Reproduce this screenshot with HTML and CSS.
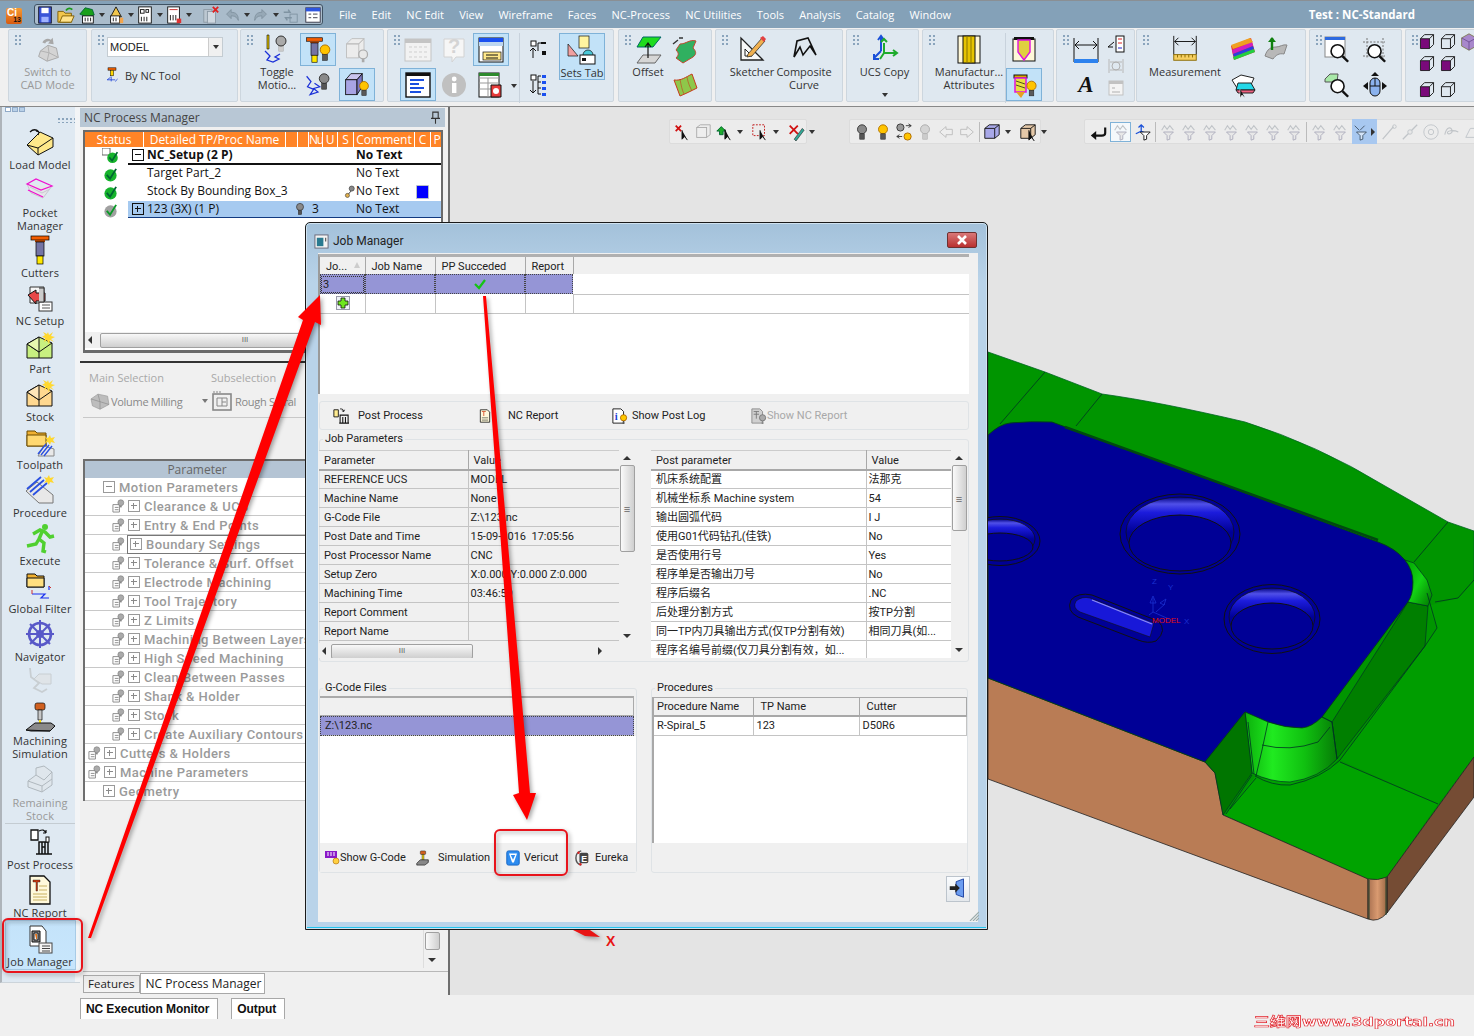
FILE: index.html
```html
<!DOCTYPE html>
<html lang="en">
<head>
<meta charset="utf-8">
<title>Job Manager</title>
<link rel="stylesheet" href="styles.css">
</head>
<body>
<svg class="defs" aria-hidden="true">
  <defs>
    <linearGradient id="gWall" x1="0" x2="1" y1="0" y2="0"><stop offset="0" stop-color="#0cb00c"/><stop offset=".3" stop-color="#20ea20"/><stop offset=".65" stop-color="#10c010"/><stop offset="1" stop-color="#067c06"/></linearGradient>
    <linearGradient id="gCorner" x1="0" x2="1" y1="0" y2="1"><stop offset="0" stop-color="#00a000"/><stop offset=".5" stop-color="#14d414"/><stop offset="1" stop-color="#007400"/></linearGradient>
    <linearGradient id="gHole" x1="0" x2="0" y1="0" y2="1"><stop offset="0" stop-color="#000080"/><stop offset=".1" stop-color="#5050e8"/><stop offset=".22" stop-color="#1c1cdc"/><stop offset=".5" stop-color="#000096"/></linearGradient>
    <linearGradient id="gBrown" x1="0" x2="1" y1="0" y2="0"><stop offset="0" stop-color="#a87050"/><stop offset=".5" stop-color="#d99a70"/><stop offset="1" stop-color="#9a6844"/></linearGradient>
    <symbol id="bulbY" viewBox="0 0 12 20"><circle cx="6" cy="7" r="5" fill="#ffc400" stroke="#b07000"/><rect x="3.5" y="12" width="5" height="6" fill="#5a5a5a" stroke="#222" stroke-width=".6"/></symbol>
    <symbol id="bulbG" viewBox="0 0 12 20"><circle cx="6" cy="7" r="5" fill="#8a8a8a" stroke="#333"/><rect x="3.5" y="12" width="5" height="6" fill="#555" stroke="#222" stroke-width=".6"/></symbol>
    <symbol id="bulbD" viewBox="0 0 12 20"><circle cx="6" cy="7" r="5" fill="#d4d4d4" stroke="#aaa"/><rect x="3.5" y="12" width="5" height="6" fill="#ccc" stroke="#aaa" stroke-width=".6"/></symbol>
    <symbol id="tool" viewBox="0 0 32 32"><rect x="7" y="2" width="18" height="4" fill="#f25c00" stroke="#000" stroke-width=".7"/><rect x="11" y="6" width="10" height="2" fill="#a84000"/><rect x="12" y="8" width="8" height="14" fill="#7474a4" stroke="#000" stroke-width=".7"/><rect x="13" y="22" width="6" height="8" fill="#ffe800" stroke="#000" stroke-width=".7"/></symbol>
    <symbol id="chk" viewBox="0 0 16 16"><circle cx="8" cy="9" r="6.5" fill="#16b32c"/><path d="M4 8.5l3.5 4L14 2" fill="none" stroke="#063" stroke-width="2"/></symbol>
    <symbol id="chkG" viewBox="0 0 16 16"><circle cx="8" cy="9" r="6.5" fill="#a0a0a0"/><path d="M4 8.5l3.5 4L14 2" fill="none" stroke="#0a9a28" stroke-width="2"/></symbol>
    <symbol id="tp" viewBox="0 0 14 15"><path d="M1 6h7v8H1z" fill="#fff" stroke="#888"/><path d="M3 9h4M3 11.5h4" stroke="#888"/><circle cx="9.5" cy="4" r="3.2" fill="#aaa" stroke="#777" stroke-width=".6"/><path d="M8.5 7h2v2h-2z" fill="#888"/></symbol>
    <symbol id="fun" viewBox="0 0 20 20"><path d="M5 10h11l-4 4v4l-3 1v-5z" fill="#e8e8e8" stroke="#aab" stroke-width="1"/><path d="M3 8l3-5 3 4 3-4 4 5" fill="none" stroke="#c0c4c8" stroke-width="1.2"/></symbol>
    <symbol id="funK" viewBox="0 0 20 20"><path d="M5 10h11l-4 4v4l-3 1v-5z" fill="#fff" stroke="#111" stroke-width="1"/></symbol>
    <symbol id="cubeGrey" viewBox="0 0 32 32"><path d="M3 13l10-7 14 3 2 12-13 7-11-5z" fill="#bdbdbd" stroke="#9a9a9a"/><path d="M13 6l3 11-13-4M16 17l0 11M16 17l13 4" fill="none" stroke="#8e8e8e"/></symbol>
    <symbol id="boxOut" viewBox="0 0 22 22"><path d="M3 7h11v12H3zM3 7l5-5h11l-5 5M19 2v12l-5 5" fill="none" stroke="#111" stroke-width="1.1"/></symbol>
    <symbol id="boxPur" viewBox="0 0 22 22"><path d="M3 7h11v12H3z" fill="#7a0a7a" stroke="#111"/><path d="M3 7l5-5h11l-5 5M19 2v12l-5 5" fill="none" stroke="#111" stroke-width="1.1"/></symbol>
    <symbol id="mag" viewBox="0 0 32 32"><circle cx="13" cy="15" r="8" fill="#fff" stroke="#111" stroke-width="2"/><path d="M19 21l7 7" stroke="#111" stroke-width="3"/></symbol>
  </defs>
</svg>

<div class="app">
  <header class="titlebar">
    <div class="logo"><span class="logo-c">Ci</span><span class="logo-n">13</span></div>
    <div class="qat">
      <svg class="q" viewBox="0 0 20 20"><rect x="3" y="1" width="14" height="18" fill="#3a55d8" stroke="#112"/><rect x="6" y="2" width="8" height="6" fill="#fff"/><rect x="6" y="12" width="8" height="6" fill="#9fb2ff"/></svg>
      <svg class="q" viewBox="0 0 20 20"><path d="M1 6h6l2 2h7v10H1z" fill="#f2c64c" stroke="#7a5a00"/><path d="M3 18l3-7h13l-3 7z" fill="#ffe28a" stroke="#7a5a00"/><path d="M10 5c2-3 5-3 7-1" fill="none" stroke="#1c9a1c" stroke-width="2"/></svg>
      <svg class="q" viewBox="0 0 20 20"><path d="M2 9l6-7 8 2 2 6-8 2z" fill="#1aa01a" stroke="#063"/><rect x="5" y="11" width="12" height="8" fill="#fff" stroke="#111"/><path d="M8 13v4M11 13v4M14 13v4" stroke="#111"/></svg>
      <i class="dd"></i>
      <svg class="q" viewBox="0 0 20 20"><path d="M10 1l6 11H4z" fill="#f2c64c" stroke="#111"/><rect x="4" y="11" width="10" height="8" fill="#fff" stroke="#111"/><path d="M7 13v4M10 13v4" stroke="#111"/><rect x="14" y="13" width="4" height="6" fill="#f2a44c"/></svg>
      <i class="dd"></i>
      <svg class="q" viewBox="0 0 20 20"><rect x="3" y="1" width="14" height="18" fill="#fff" stroke="#111"/><rect x="5" y="4" width="4" height="4" fill="none" stroke="#111"/><rect x="11" y="4" width="3" height="3" fill="none" stroke="#111"/><path d="M6 12v5M9 12v5M12 12v5" stroke="#111"/></svg>
      <i class="dd"></i>
      <svg class="q" viewBox="0 0 20 20"><rect x="3" y="1" width="13" height="18" fill="#fff" stroke="#111"/><path d="M5 4h9" stroke="#c22"/><path d="M6 10v6M9 10v6M12 10v6" stroke="#111"/><rect x="13" y="14" width="5" height="5" fill="#d33"/></svg>
      <i class="dd"></i>
      <svg class="q q-gap" viewBox="0 0 20 20"><rect x="2" y="4" width="9" height="14" fill="#bcc8d2" stroke="#8a98a4"/><rect x="6" y="6" width="9" height="13" fill="#cfd8e0" stroke="#8a98a4"/><path d="M12 1l6 6M18 1l-6 6" stroke="#e02020" stroke-width="2"/></svg>
      <svg class="q" viewBox="0 0 20 20"><path d="M4 9l5-5v3c6 0 8 3 8 9-2-4-4-5-8-5v3z" fill="#96a8b6" stroke="#80929f"/></svg>
      <i class="dd"></i>
      <svg class="q" viewBox="0 0 20 20"><path d="M16 9l-5-5v3c-6 0-8 3-8 9 2-4 4-5 8-5v3z" fill="#96a8b6" stroke="#80929f"/></svg>
      <i class="dd"></i>
      <svg class="q" viewBox="0 0 20 20"><path d="M3 7h7l-2-3M12 13H5l2 3" fill="none" stroke="#7f93a2" stroke-width="1.6"/><rect x="10" y="9" width="8" height="9" fill="none" stroke="#7f93a2"/></svg>
      <svg class="q q-hl" viewBox="0 0 20 20"><rect x="2" y="2" width="16" height="16" fill="#fff" stroke="#334"/><rect x="2" y="2" width="16" height="4" fill="#2d55e0"/><path d="M5 9h3M10 9h5M5 13h3M10 13h5" stroke="#334"/></svg>
    </div>
    <nav class="menu">
      <span>File</span><span>Edit</span><span>NC Edit</span><span>View</span><span>Wireframe</span><span>Faces</span><span>NC-Process</span><span>NC Utilities</span><span>Tools</span><span>Analysis</span><span>Catalog</span><span>Window</span>
    </nav>
    <div class="app-title">Test : NC-Standard</div>
  </header>

  <section class="ribbon">
    <div class="group g1"><i class="grip"></i>
      <div class="tool off w79">
        <div class="ti32"><svg class="ic30" viewBox="0 0 32 32"><path d="M8 18l8-6 9 3 2 10-12 4-9-5z" fill="#d4d4d4" stroke="#a6a6a6"/><path d="M16 12l1 8-9-2M17 20l-2 9M17 20l10 5" fill="none" stroke="#b0b0b0"/><path d="M10 9c2-4 6-5 9-3l2-2 1 7-6-1 2-2c-2-1-4 0-5 2z" fill="#a8a8a8"/></svg></div>
        <span>Switch to<br>CAD Mode</span>
      </div>
    </div>
    <div class="group g2"><i class="grip"></i>
      <div class="stack">
        <div class="combo"><span>MODEL</span><b><i class="dd"></i></b></div>
        <div class="bynctool">
          <svg class="ic16" viewBox="0 0 16 20"><rect x="3" y="1" width="10" height="3" fill="#e85c00" stroke="#000" stroke-width=".6"/><rect x="6" y="4" width="4" height="7" fill="#ffd800" stroke="#000" stroke-width=".6"/><path d="M7 12v6M2 16h10M2 16l4-3M12 18l3-3" stroke="#1a3fd8" fill="none"/></svg>
          <span>By NC Tool</span>
        </div>
      </div>
    </div>
    <div class="group g3"><i class="grip"></i>
      <div class="tool w40">
        <div class="ti32"><svg class="ic32" viewBox="0 0 32 32"><path d="M6 2h2v14H6z" fill="#e8c800" stroke="#000" stroke-width=".6"/><path d="M4 18l5 5-3 4 6 2 6-3-4-2 5-3" fill="none" stroke="#1a2fd8" stroke-width="1.3"/><use href="#bulbD" x="14" y="2" width="12" height="18"/><circle cx="20" cy="8" r="5" fill="#aaa" stroke="#333"/></svg></div>
        <span>Toggle<br>Motio...</span>
      </div>
      <div class="col w36 ml3">
        <div class="slot hl"><svg class="ic26" viewBox="0 0 32 32"><use href="#tool" x="-4" width="32" height="32"/><use href="#bulbY" x="17" y="8" width="14" height="22"/></svg></div>
        <div class="slot"><svg class="ic26" viewBox="0 0 32 32"><path d="M3 6l5 6-4 6 7 3-4 6 9-3-5-4 7-2-6-4" fill="none" stroke="#1a2fd8" stroke-width="1.4"/><use href="#bulbG" x="16" y="1" width="14" height="22"/></svg></div>
      </div>
      <div class="col w36 ml3">
        <div class="slot"><svg class="ic26" viewBox="0 0 32 32"><path d="M4 9l6-6h14l-6 6zM4 9h14v16H4zM18 9l6-6v14l-6 8" fill="#ececec" stroke="#bcbcbc"/><circle cx="23" cy="21" r="5" fill="#e8e8e8" stroke="#aaa" stroke-width="1.4"/><path d="M23 26v4" stroke="#aaa" stroke-width="3"/></svg></div>
        <div class="slot hl"><svg class="ic26" viewBox="0 0 32 32"><path d="M3 10l6-7h13l-6 7z" fill="#c8c4ee" stroke="#111"/><rect x="3" y="10" width="13" height="17" fill="#a8a4e4" stroke="#111"/><path d="M16 10l6-7v15l-6 9z" fill="#7c78c4" stroke="#111"/><use href="#bulbY" x="18" y="10" width="12" height="20"/></svg></div>
      </div>
    </div>
    <div class="group g4"><i class="grip"></i>
      <div class="col w36">
        <div class="slot"><svg class="ic26" viewBox="0 0 28 28"><rect x="1" y="3" width="26" height="22" fill="#f2f2f2" stroke="#c4c4c4"/><rect x="1" y="3" width="26" height="4" fill="#c4c4c4"/><path d="M5 11h18M5 16h18M5 21h18" stroke="#cfcfcf" stroke-dasharray="3 2"/></svg></div>
        <div class="slot hl"><svg class="ic26" viewBox="0 0 28 28"><rect x="2" y="2" width="24" height="24" fill="#fff" stroke="#111" stroke-width="1.4"/><rect x="2" y="2" width="24" height="3" fill="#111"/><path d="M6 9h14M6 13h9M6 17h14M6 21h11" stroke="#1a4fe0" stroke-width="2"/></svg></div>
      </div>
      <div class="col w36">
        <div class="slot"><svg class="ic26" viewBox="0 0 28 28"><path d="M4 3h20v18h-8l-4 5v-5H4z" fill="#f6f6f6" stroke="#d2d2d2"/><text class="glyph" x="14" y="17" text-anchor="middle">?</text></svg></div>
        <div class="slot"><svg class="ic26" viewBox="0 0 28 28"><circle cx="14" cy="14" r="12" fill="#c0c0c0"/><rect x="12" y="12" width="4.4" height="10" fill="#fff"/><circle cx="14.2" cy="8" r="2.4" fill="#fff"/></svg></div>
      </div>
      <div class="col w36 ml1">
        <div class="slot hl"><svg class="ic26" viewBox="0 0 28 28"><rect x="2" y="2" width="24" height="24" fill="#fff" stroke="#111"/><rect x="2" y="2" width="24" height="4" fill="#1a50f0"/><rect x="2" y="6" width="24" height="4" fill="#bcd6f0"/><rect x="6" y="16" width="18" height="8" fill="#ffe88a" stroke="#111" stroke-width=".7"/><path d="M9 19h12M9 22h12" stroke="#111"/></svg></div>
        <div class="slot"><svg class="ic26" viewBox="0 0 28 28"><rect x="2" y="2" width="20" height="24" fill="#fff" stroke="#111"/><path d="M2 7h20M2 12h20M2 18h20M11 7v19" stroke="#999"/><rect x="2" y="2" width="20" height="3" fill="#2d8a2d"/><path d="M14 14h10v12H14z" fill="#e63a3a" stroke="#111"/><circle cx="19" cy="20" r="3" fill="#fff"/></svg></div>
      </div>
      <div class="ddcol"><i class="dd"></i></div>
      <div class="col w38 sepl">
        <div class="slot"><svg class="ic20" viewBox="0 0 20 24"><rect x="2" y="3" width="5" height="5" fill="#fff" stroke="#111"/><rect x="12" y="4" width="5" height="2" fill="#111"/><path d="M9 5h3M9 5v8" stroke="#111"/><rect x="13" y="13" width="4" height="4" fill="#111"/><path d="M4 10v10M1 13l3-3 3 3" fill="none" stroke="#111"/></svg></div>
        <div class="slot"><svg class="ic20" viewBox="0 0 20 24"><rect x="2" y="2" width="5" height="5" fill="#fff" stroke="#111"/><path d="M4 8v12M1 17l3 3 3-3M12 3h-3v18h3M9 9h3M9 15h3" fill="none" stroke="#111"/><path d="M13 2h4v3h-4zM13 8h4v3h-4zM13 14h4v3h-4zM13 20h4v3h-4z" fill="#1a50f0"/></svg></div>
      </div>
      <div class="tool hl w46 h47 ml2">
        <div class="ti32 t-sets"><svg class="ic32" viewBox="0 0 32 32"><rect x="13" y="2" width="10" height="12" fill="#fff4a0" stroke="#111" stroke-width=".7"/><path d="M2 10l10 12H2z" fill="#f0a0a0" stroke="#111" stroke-width=".7"/><circle cx="22" cy="21" r="5" fill="#4ac8d8" stroke="#111" stroke-width=".7"/><rect x="14" y="21" width="15" height="9" fill="#fff" stroke="#111"/><rect x="16" y="24" width="4" height="3" fill="#111"/></svg></div>
        <span class="lab1">Sets Tab</span>
      </div>
    </div>
    <div class="group g5"><i class="grip"></i>
      <div class="tool w40">
        <div class="ti32"><svg class="ic32" viewBox="0 0 32 32"><path d="M5 14L11 4h18l-8 10z" fill="#1edc1e" stroke="#066"/><path d="M5 30l6-8h18l-6 8z" fill="#d6d6d6" stroke="#666"/><path d="M16 25V11M13 14l3-4 3 4" fill="none" stroke="#111" stroke-width="1.2"/></svg></div>
        <span>Offset</span>
      </div>
      <div class="col w34">
        <div class="slot"><svg class="ic26" viewBox="0 0 28 28"><path d="M9 8c6 0 10-5 16-3l-3 7c3 3 4 6 0 9l-10 6-7-5c3-3 3-5 0-8z" fill="#30b060" stroke="#c04a30"/><path d="M2 8l5-4M8 2l4 0" stroke="#333" stroke-width="1.4"/></svg></div>
        <div class="slot"><svg class="ic26" viewBox="0 0 28 28"><path d="M3 9c7 1 12-3 18-6l5 14c-6 3-12 6-17 8z" fill="#8ec84a" stroke="#c83a1c"/><path d="M9 8c1 6 2 11 4 15M16 6c1 6 3 10 5 14" stroke="#c83a1c" fill="none" stroke-width=".6"/></svg></div>
      </div>
    </div>
    <div class="group g6"><i class="grip"></i>
      <div class="tool w46">
        <div class="ti32"><svg class="ic26" viewBox="0 0 28 28"><path d="M3 3v22h22z" fill="#f8f8f8" stroke="#222" stroke-width="1.3"/><path d="M7 14v7h7z" fill="#fff" stroke="#222"/><path d="M10 19L24 3l3 3-13 15-5 1z" fill="#f0b050" stroke="#222" stroke-width=".7"/><path d="M22 3l3-2 3 3-2 3z" fill="#e24040"/></svg></div>
        <span>Sketcher</span>
      </div>
      <div class="tool w56 ml1">
        <div class="ti32"><svg class="ic26" viewBox="0 0 28 28"><path d="M4 22L7 6l11-3 8 17-6-9-7 9-3-8z" fill="none" stroke="#111" stroke-width="1.6"/></svg></div>
        <span>Composite<br>Curve</span>
      </div>
    </div>
    <div class="group g7"><i class="grip"></i>
      <div class="tool w73">
        <div class="ti32"><svg class="ic32" viewBox="0 0 32 32"><path d="M12 4v14M12 18l-7 7M9 7l3-4 3 4" fill="none" stroke="#1a50d8" stroke-width="2"/><path d="M5 21v5h5" fill="none" stroke="#1a50d8" stroke-width="2"/><path d="M15 10v10M15 20l-4 6M15 20h12M24 17l4 3-4 3M12 9l3-3 3 3" fill="none" stroke="#1eab2c" stroke-width="2"/></svg></div>
        <span>UCS Copy</span>
        <i class="dd dd-ucs"></i>
      </div>
    </div>
    <div class="group g8"><i class="grip"></i>
      <div class="tool w72">
        <div class="ti32"><svg class="ic32" viewBox="0 0 32 32"><rect x="5" y="3" width="22" height="27" fill="#fff8d8" stroke="#111"/><rect x="10" y="3" width="12" height="27" fill="#e6c400" stroke="#111"/><path d="M14 3v27M18 3v27" stroke="#8a7400"/></svg></div>
        <span>Manufactur...<br>Attributes</span>
      </div>
      <div class="col w36 sepl">
        <div class="slot"><svg class="ic26" viewBox="0 0 28 28"><rect x="3" y="3" width="22" height="22" fill="#fff8d8" stroke="#111"/><path d="M4 1h20v3H4z" fill="#111"/><path d="M8 4h12v12l-6 8-6-8z" fill="#e0d040" stroke="#e010e0" stroke-width="1.4"/></svg></div>
        <div class="slot hl"><svg class="ic26" viewBox="0 0 28 28"><rect x="4" y="4" width="13" height="3" fill="#d8a800" stroke="#111"/><rect x="5" y="7" width="11" height="14" fill="#e8e040" stroke="#e010e0" stroke-width="1.5"/><path d="M6 10l9 3M6 14l9 3" stroke="#111" stroke-width=".7"/><path d="M6 21h9l-4 6z" fill="#e8a020"/><use href="#bulbY" x="16" y="8" width="11" height="19"/></svg></div>
      </div>
    </div>
    <div class="group g9"><i class="grip"></i>
      <div class="col w36">
        <div class="slot"><svg class="ic26" viewBox="0 0 28 28"><path d="M2 2v24M26 2v24" stroke="#111"/><path d="M3 9h22M7 5L3 9l4 4M21 5l4 4-4 4" fill="none" stroke="#111"/><rect x="2" y="23" width="24" height="4" fill="#2d82ee"/></svg></div>
        <div class="slot"><span class="big-a">A</span></div>
      </div>
      <div class="col w24 mini3">
        <svg class="ic18" viewBox="0 0 18 18"><rect x="9" y="1" width="8" height="16" fill="#fff" stroke="#111"/><path d="M1 12l6-5M1 12h5" stroke="#111" fill="none"/><path d="M11 4h4M11 8h4" stroke="#d22"/><path d="M11 13h4" stroke="#22c"/></svg>
        <svg class="ic18" viewBox="0 0 18 18"><path d="M2 2v14M16 2v14M3 5h12M3 13h12" stroke="#b8b8b8" fill="none"/><circle cx="9" cy="9" r="4" fill="none" stroke="#b0b0b0"/></svg>
        <svg class="ic18" viewBox="0 0 18 18"><rect x="2" y="2" width="14" height="14" fill="#f4f4f4" stroke="#c2c2c2"/><rect x="2" y="2" width="14" height="3" fill="#c2c2c2"/><path d="M5 13h8M5 9h3" stroke="#b0b0b0"/></svg>
      </div>
    </div>
    <div class="group g10"><i class="grip"></i>
      <div class="tool w74">
        <div class="ti32"><svg class="ic30" viewBox="0 0 32 32"><path d="M4 2v20M28 2v20" stroke="#111"/><path d="M5 8h22M9 4L5 8l4 4M23 4l4 4-4 4" fill="none" stroke="#111"/><rect x="4" y="22" width="24" height="6" fill="#f6cf60" stroke="#8a6a00"/><path d="M8 22v3M12 22v3M16 22v3M20 22v3M24 22v3" stroke="#8a6a00"/></svg></div>
        <span>Measurement</span>
      </div>
      <div class="col w36 ml3">
        <div class="slot"><svg class="ic26" viewBox="0 0 28 28"><path d="M2 10l20-8 4 14-21 8z" fill="#e83030"/><path d="M3 14l20-8 1 4-20 8z" fill="#d020c0"/><path d="M4 18l20-8 1 3-20 8z" fill="#2a40e0"/><path d="M4 21l21-8 1 3-21 8z" fill="#20d040"/><path d="M2 9l19-7 3 4-20 7z" fill="#f0a020"/></svg></div>
        <div class="slot"><svg class="ic26" viewBox="0 0 28 28"><path d="M3 9l9-5 13 3-4 9-13 1z" fill="#fff" stroke="#222"/><path d="M9 12h13l4 7H7z" fill="#24d8e8" stroke="#222"/><path d="M7 19h19l-2 3H9z" fill="#f06080" stroke="#222"/><path d="M11 18v9l2-3 3 3" fill="#111" stroke="#fff" stroke-width=".5"/></svg></div>
      </div>
      <div class="col w36 ml-3">
        <div class="slot"><svg class="ic26" viewBox="0 0 28 28"><path d="M3 20c2-7 6-9 11-9 4 0 7-3 11-2l-3 9c-5-1-8 1-11 5z" fill="#b8b8b8" stroke="#888"/><path d="M10 14V2" stroke="#108010" stroke-width="2.4"/><path d="M6 6l4-5 4 5z" fill="#108010"/></svg></div>
      </div>
    </div>
    <div class="group g11"><i class="grip"></i>
      <div class="col w36">
        <div class="slot"><svg class="ic26" viewBox="0 0 28 28"><rect x="1" y="1" width="20" height="20" fill="#fff" stroke="#888"/><rect x="1" y="1" width="20" height="3" fill="#2d6ae0"/><use href="#mag" x="3" y="3" width="26" height="26"/></svg></div>
        <div class="slot"><svg class="ic26" viewBox="0 0 28 28"><path d="M1 8l5-5h8l-1 8H1z" fill="#a8e8a8" stroke="#555"/><use href="#mag" x="3" y="3" width="26" height="26"/></svg></div>
      </div>
      <div class="col w36 ml1">
        <div class="slot"><svg class="ic26" viewBox="0 0 28 28"><path d="M2 6h22M6 2v20M22 2v20M2 20h22" stroke="#777" stroke-dasharray="2 1.5"/><use href="#mag" x="3" y="3" width="26" height="26"/></svg></div>
        <div class="slot"><svg class="ic26" viewBox="0 0 28 28"><rect x="9" y="7" width="10" height="18" rx="5" fill="#8ab2ee" stroke="#111"/><path d="M14 7v8M9 15h10" stroke="#111"/><path d="M14 1l-4 4h8zM2 15l5-4v8zM26 15l-5-4v8z" fill="#111"/></svg></div>
      </div>
    </div>
    <div class="group g12"><i class="grip"></i>
      <div class="col w21 boxes"><svg class="ic18"><use href="#boxPur"/></svg><svg class="ic18"><use href="#boxPur"/></svg><svg class="ic18"><use href="#boxPur"/></svg></div>
      <div class="col w21 boxes"><svg class="ic18"><use href="#boxOut"/></svg><svg class="ic18"><use href="#boxPur"/></svg><svg class="ic18"><use href="#boxOut"/></svg></div>
      <div class="col w21 boxes"><svg class="ic18" viewBox="0 0 22 22"><path d="M11 1l9 5v10l-9 5-9-5V6z" fill="#a888cc" stroke="#774"/><path d="M2 6l9 5 9-5M11 11v10" stroke="#6a4a90" fill="none"/></svg></div>
    </div>
  </section>

  <div class="workspace">
    <aside class="sidebar">
      <div class="side-tabs"><i></i><i></i><i></i></div>
      <i class="grip grip-h"></i>
      <div class="sitem"><svg class="ic32" viewBox="0 0 32 32"><path d="M3 19L16 6l13 6v9L14 29z" fill="#ffe88a" stroke="#111"/><path d="M3 19l11 3 15-10M14 22v7" fill="none" stroke="#111"/><path d="M6 6c3-3 6-3 9 0M15 6l-3-1M15 6l-1 3" fill="none" stroke="#111" stroke-width="1.2"/></svg><span>Load Model</span></div>
      <div class="sitem tall"><svg class="ic32" viewBox="0 0 32 32"><path d="M3 10l9-5 16 7-10 5z" fill="none" stroke="#f010d0" stroke-width="1.3"/><path d="M6 13l12 6 8-4M3 10l4 9 12 5 9-12" fill="#e6e6ea" stroke="#c8c8d0"/><path d="M3 10l14 6 11-4M4 16l15 7" fill="none" stroke="#f010d0" stroke-width="1.3"/></svg><span>Pocket<br>Manager</span></div>
      <div class="sitem"><svg class="ic32"><use href="#tool"/></svg><span>Cutters</span></div>
      <div class="sitem"><svg class="ic32" viewBox="0 0 32 32"><path d="M6 5h14v16H6z" fill="#f6f6f6" stroke="#333"/><path d="M4 13l8-5v3h9v8h-9v3z" fill="#e84848" stroke="#111"/><rect x="15" y="20" width="13" height="9" fill="#fff" stroke="#333"/><path d="M18 23h8M18 26h8" stroke="#555"/><path d="M15 6h5v14h-5" fill="#ccc" stroke="#333"/></svg><span>NC Setup</span></div>
      <div class="sitem"><svg class="ic32" viewBox="0 0 32 32"><path d="M3 14l12-7 13 6v15H3z" fill="#c8f080" stroke="#111"/><path d="M3 14l12 8 13-9M15 22v6" fill="none" stroke="#111"/><path d="M3 14l12-7 0 15z" fill="#e8f8b0" stroke="#111"/><path d="M24 2l1 3 4-3-2 4 4 1-4 2 3 3-4-2-1 4-2-4-3 2 1-4-3-1 3-2-2-3 4 2z" fill="#ffd830"/></svg><span>Part</span></div>
      <div class="sitem"><svg class="ic32" viewBox="0 0 32 32"><path d="M3 14l12-7 13 6v15H3z" fill="#ffd890" stroke="#111"/><path d="M3 14l12 8 13-9M15 22v6" fill="none" stroke="#111"/><path d="M3 14l12-7 0 15z" fill="#ffe6b8" stroke="#111"/><path d="M24 2l1 3 4-3-2 4 4 1-4 2 3 3-4-2-1 4-2-4-3 2 1-4-3-1 3-2-2-3 4 2z" fill="#ffd830"/></svg><span>Stock</span></div>
      <div class="sitem"><svg class="ic32" viewBox="0 0 32 32"><path d="M3 5h8l2 2h9v13H3z" fill="#f0b030" stroke="#6a4a00"/><path d="M3 9h19v11H3z" fill="#ffd870" stroke="#6a4a00"/><path d="M14 30l6-10 10 3v7z" fill="#e8e8e8" stroke="#888"/><path d="M14 28l8-10M17 29l8-10M20 30l8-10" stroke="#2a50e0" stroke-width="1.4"/><path d="M26 9l1 3 4-1-2 3 2 3-4-1-1 3-2-3-3 1 2-3-2-3 3 1z" fill="#ffd830"/></svg><span>Toolpath</span></div>
      <div class="sitem"><svg class="ic32" viewBox="0 0 32 32"><path d="M2 17l11-9 16 13v8H15z" fill="#e8e8e8" stroke="#777"/><path d="M3 15L17 3M6 18L20 6M9 21L23 9" stroke="#2a50e0" stroke-width="1.8"/><path d="M25 1l1 3 4-1-2 3 2 3-4-1-1 3-2-3-3 1 2-3-2-3 3 1z" fill="#ffd830"/></svg><span>Procedure</span></div>
      <div class="sitem"><svg class="ic32" viewBox="0 0 32 32"><circle cx="21" cy="5" r="3" fill="#50d030"/><path d="M9 12l7-4 5 2 5 5 4-1M18 10l-3 7 5 4-1 8 3 1M15 17l-3 5-9 2" fill="none" stroke="#50d030" stroke-width="3.4"/></svg><span>Execute</span></div>
      <div class="sitem"><svg class="ic32" viewBox="0 0 32 32"><path d="M3 4h8l2 2h7v11H3z" fill="#f0b030" stroke="#111"/><path d="M3 8h17v9H3z" fill="#ffdf80" stroke="#111"/><path d="M8 24h13l-4 4h8M25 20v-4" fill="none" stroke="#1a30f0" stroke-width="1.2"/><path d="M25 16l2 2M8 24v-4" stroke="#d03030"/></svg><span>Global Filter</span></div>
      <div class="sitem"><svg class="ic32" viewBox="0 0 32 32"><g fill="none" stroke="#5858c8"><circle cx="16" cy="16" r="11" stroke-width="2.6"/><circle cx="16" cy="16" r="3" stroke-width="2"/><path d="M16 2v28M2 16h28M6 6l20 20M26 6L6 26" stroke-width="2"/></g></svg><span>Navigator</span></div>
      <div class="sitem bare"><svg class="ic32" viewBox="0 0 32 32"><path d="M6 2l1 9 8 6-5 5 8 4 5-3" fill="none" stroke="#c8ced2" stroke-width="1.8"/><path d="M10 13l5-5h12v10H18z" fill="#dfe4e8" stroke="#c8ced2"/></svg></div>
      <div class="sitem tall2"><svg class="ic32" viewBox="0 0 32 32"><rect x="11" y="1" width="10" height="7" rx="2" fill="#d06020" stroke="#111" stroke-width=".7"/><path d="M14 8h4v10h-4z" fill="#c8c8c8" stroke="#111" stroke-width=".7"/><rect x="15" y="18" width="2" height="6" fill="#ffe000"/><path d="M2 28l9-7h16l4 3-5 5H7z" fill="#8a8a8a" stroke="#111"/><path d="M2 28l24 1 5-5" fill="none" stroke="#111"/></svg><span>Machining<br>Simulation</span></div>
      <div class="sitem tall2 off"><svg class="ic32" viewBox="0 0 32 32"><path d="M4 17l8-6v-7l8-2 8 6v13l-10 7-14-5z" fill="#dfe6ec" stroke="#b0b8be"/><path d="M4 17l14 5v6M18 22l10-7M12 11l8 5 8-8" fill="none" stroke="#b0b8be"/></svg><span>Remaining<br>Stock</span></div>
      <div class="side-div"></div>
      <div class="sitem"><svg class="ic32" viewBox="0 0 32 32"><path d="M7 4h7v10H7z" fill="#fff" stroke="#111" stroke-width="1.3"/><path d="M15 5c4-2 5-1 7 2M22 7l-3 0M22 7l0-3" fill="none" stroke="#111" stroke-width="1.2"/><path d="M15 28V16h9v12M12 28h16M18 16v12M21 16v12M18 21h3" fill="none" stroke="#111" stroke-width="1.5"/><rect x="22" y="11" width="3" height="5" fill="#fff" stroke="#111"/></svg><span>Post Process</span></div>
      <div class="sitem"><svg class="ic32" viewBox="0 0 32 32"><path d="M6 2h14l6 6v22H6z" fill="#fff9dc" stroke="#111" stroke-width="1.3"/><path d="M9 6h7v2h-2.500v9H12V8H9z" fill="#d03a10" stroke="#111" stroke-width=".4"/><path d="M9 20h14M9 23h14M9 26h14M15 12h8M15 16h8" stroke="#c8b060"/></svg><span>NC Report</span></div>
      <div class="sitem active"><svg class="ic32" viewBox="0 0 32 32"><path d="M6 3h12l4 5v15H6z" fill="#fff" stroke="#333"/><path d="M8 8h8v11H8z" fill="#888" stroke="#111"/><path d="M10 10h4v7h-4z" fill="#fff" stroke="#111"/><path d="M11 11h2v5h-1z" fill="#e07018"/><rect x="15" y="20" width="13" height="10" fill="#f4f4f4" stroke="#444"/><path d="M18 23h8M18 25.500h8M18 28h8" stroke="#444"/></svg><span>Job Manager</span></div>
    </aside>

    <div class="work-main">
      <div class="work-top">
        <section class="nc-panel">
          <div class="panel-head"><span>NC Process Manager</span><svg class="pin" viewBox="0 0 10 14"><path d="M2 1h6v7H2zM0 8h10M5 8v6" fill="none" stroke="#333" stroke-width="1.2"/></svg></div>
          <div class="proc-frame">
            <div class="orange">
              <span class="c-status">Status</span><span class="c-name">Detailed TP/Proc Name</span><span class="c-a"></span><span class="c-b"></span><span class="c-nu">Nu</span><span class="c-u">U</span><span class="c-s">S</span><span class="c-com">Comment</span><span class="c-c">C</span><span class="c-p">P</span>
            </div>
            <div class="prow">
              <div class="pstat"><svg class="st st-top" viewBox="0 0 16 16"><rect x="0" y="0" width="8" height="7" fill="#fff" stroke="#666"/><use href="#chk" x="4" y="2" width="13" height="14"/></svg></div>
              <div class="pbody setup"><span class="pexp"><i class="ex dark minus"></i></span><b class="nowrap">NC_Setup (2 P)</b><span></span><span></span><b class="nowrap">No Text</b><span></span></div>
            </div>
            <div class="prow">
              <div class="pstat"><svg class="st"><use href="#chk"/></svg></div>
              <div class="pbody"><span class="pexp"></span><span>Target Part_2</span><span></span><span></span><span>No Text</span><span></span></div>
            </div>
            <div class="prow">
              <div class="pstat"><svg class="st"><use href="#chk"/></svg></div>
              <div class="pbody"><span class="pexp"></span><span class="nowrap">Stock By Bounding Box_3</span><span></span><span class="pend"><svg class="ic12" viewBox="0 0 14 16"><circle cx="9" cy="4" r="3" fill="#888" stroke="#222" stroke-width=".6"/><path d="M8 7l-4 5" stroke="#222"/><circle cx="4" cy="12" r="2.4" fill="#e0b050" stroke="#222" stroke-width=".6"/></svg></span><span>No Text</span><span class="swatch-cell"><i class="swatch"></i></span></div>
            </div>
            <div class="prow">
              <div class="pstat"><svg class="st"><use href="#chkG"/></svg></div>
              <div class="pbody sel"><span class="pexp"><i class="ex dark"></i></span><span>123 (3X) (1 P)</span><span class="pbulb"><svg class="ic12"><use href="#bulbG"/></svg></span><span class="pnum">3</span><span>No Text</span><span></span></div>
            </div>
            <div class="hs proc-hs"><i class="arl"></i><div class="thumb"><em>III</em></div></div>
          </div>
          <div class="lower">
            <div class="lower-main">
              <div class="sel-section">
                <div class="sel-labels"><span>Main Selection</span><span>Subselection</span></div>
                <div class="sel-values">
                  <span class="sel-a"><svg class="ic22"><use href="#cubeGrey"/></svg><span>Volume Milling</span><i class="dd"></i></span>
                  <span class="sel-b"><svg class="ic20" viewBox="0 0 20 20"><rect x="1" y="3" width="18" height="16" fill="none" stroke="#888" stroke-width="1.6"/><path d="M1 1h8" stroke="#888" stroke-dasharray="2 1"/><path d="M5 7h10v8H5zM10 11h4M10 7v8" fill="none" stroke="#888"/></svg><span>Rough Spiral</span></span>
                </div>
              </div>
              <div class="tree">
                <div class="tree-head">Parameter</div>
                <div class="tr l1"><i class="ex minus"></i><span>Motion Parameters</span></div>
                <div class="tr l2"><svg class="tpi"><use href="#tp"/></svg><i class="ex"></i><span>Clearance &amp; UCS</span></div>
                <div class="tr l2"><svg class="tpi"><use href="#tp"/></svg><i class="ex"></i><span>Entry &amp; End Points</span></div>
                <div class="tr l2"><svg class="tpi"><use href="#tp"/></svg><div class="focusbox"><i class="ex"></i><span>Boundary Settings</span></div></div>
                <div class="tr l2"><svg class="tpi"><use href="#tp"/></svg><i class="ex"></i><span>Tolerance &amp; Surf. Offset</span></div>
                <div class="tr l2"><svg class="tpi"><use href="#tp"/></svg><i class="ex"></i><span>Electrode Machining</span></div>
                <div class="tr l2"><svg class="tpi"><use href="#tp"/></svg><i class="ex"></i><span>Tool Trajectory</span></div>
                <div class="tr l2"><svg class="tpi"><use href="#tp"/></svg><i class="ex"></i><span>Z Limits</span></div>
                <div class="tr l2"><svg class="tpi"><use href="#tp"/></svg><i class="ex"></i><span>Machining Between Layers</span></div>
                <div class="tr l2"><svg class="tpi"><use href="#tp"/></svg><i class="ex"></i><span>High Speed Machining</span></div>
                <div class="tr l2"><svg class="tpi"><use href="#tp"/></svg><i class="ex"></i><span>Clean Between Passes</span></div>
                <div class="tr l2"><svg class="tpi"><use href="#tp"/></svg><i class="ex"></i><span>Shank &amp; Holder</span></div>
                <div class="tr l2"><svg class="tpi"><use href="#tp"/></svg><i class="ex"></i><span>Stock</span></div>
                <div class="tr l2"><svg class="tpi"><use href="#tp"/></svg><i class="ex"></i><span>Create Auxiliary Contours</span></div>
                <div class="tr l0"><svg class="tpi"><use href="#tp"/></svg><i class="ex"></i><span>Cutters &amp; Holders</span></div>
                <div class="tr l0"><svg class="tpi"><use href="#tp"/></svg><i class="ex"></i><span>Machine Parameters</span></div>
                <div class="tr l1"><i class="ex"></i><span>Geometry</span></div>
              </div>
            </div>
            <div class="lower-scroll"><div class="vthumb"></div><i class="ard"></i></div>
          </div>
          <div class="panel-tabs"><span class="ptab">Features</span><span class="ptab on">NC Process Manager</span></div>
        </section>

        <section class="viewport">
          <div class="vbars">
            <div class="vbar vb1">
              <svg class="ic18" viewBox="0 0 20 20"><path d="M3 3l6 6M9 3L3 9" stroke="#d01010" stroke-width="2"/><path d="M10 8v10l3-3 3 4" fill="#111" stroke="#111"/></svg>
              <svg class="ic18" viewBox="0 0 20 20"><rect x="3" y="5" width="11" height="11" fill="#eee" stroke="#aaa"/><path d="M3 5l4-3h11v11l-4 3" fill="none" stroke="#aaa"/></svg>
              <svg class="ic18" viewBox="0 0 20 20"><path d="M2 9l5-5 5 5H9v4H5V9z" fill="#1eab2c" stroke="#063"/><path d="M11 7v11l3-3 3 4" fill="#111" stroke="#111"/></svg><i class="dd"></i>
              <svg class="ic18 sp7" viewBox="0 0 20 20"><rect x="2" y="2" width="13" height="12" fill="none" stroke="#c01010" stroke-dasharray="2 1.5"/><path d="M10 8v10l3-3 3 4" fill="#111" stroke="#111"/></svg><i class="dd"></i>
              <svg class="ic18 sp7" viewBox="0 0 20 20"><path d="M3 3l9 9M12 3l-9 9" stroke="#d01010" stroke-width="2"/><path d="M8 18l9-12 2 2-9 12z" fill="#3a9" stroke="#111" stroke-width=".6"/></svg><i class="dd"></i>
            </div>
            <div class="vbar vb2">
              <svg class="ic18"><use href="#bulbG"/></svg>
              <svg class="ic18"><use href="#bulbY"/></svg>
              <svg class="ic18" viewBox="0 0 20 20"><circle cx="6" cy="5" r="4" fill="#999" stroke="#333"/><circle cx="14" cy="15" r="4" fill="#ffc400" stroke="#a60"/><path d="M12 3h6M15 1l3 2-3 2M2 15h6M5 13l-3 2 3 2" fill="none" stroke="#333"/></svg>
              <svg class="ic18"><use href="#bulbD"/></svg>
              <svg class="ic18" viewBox="0 0 20 20"><path d="M3 10l7-6v3h7v6h-7v3z" fill="#eee" stroke="#bbb"/></svg>
              <svg class="ic18" viewBox="0 0 20 20"><path d="M17 10l-7-6v3H3v6h7v3z" fill="#eee" stroke="#bbb"/></svg>
              <i class="vsep"></i>
              <svg class="ic18" viewBox="0 0 20 20"><path d="M2 6l5-4h11v11l-5 4H2z" fill="#a8a8e8" stroke="#111"/><path d="M2 6h11v11M13 6l5-4" fill="none" stroke="#111"/></svg><i class="dd"></i>
              <svg class="ic18 sp7" viewBox="0 0 20 20"><path d="M2 6l5-4h11v11l-5 4H2z" fill="#e4c8a8" stroke="#111"/><path d="M2 6h11v11M13 6l5-4" fill="none" stroke="#111"/><path d="M11 8v11l3-3 3 4" fill="#111" stroke="#111"/></svg><i class="dd"></i>
            </div>
            <div class="vbar vb3">
              <svg class="ic18" viewBox="0 0 20 20"><path d="M18 5v6c0 2-2 3-4 3H7" fill="none" stroke="#111" stroke-width="2.400"/><path d="M8 9l-6 5 6 5z" fill="#111"/></svg>
              <span class="vb-hl"><svg class="ic18"><use href="#fun"/></svg></span>
              <svg class="ic18" viewBox="0 0 20 20"><path d="M8 9V2M5 5l3-3 3 3M2 12l6-3 4 2" fill="none" stroke="#1a50d8" stroke-width="1.400"/><use href="#funK" width="20" height="20" x="2" y="0"/></svg>
              <i class="vsep"></i>
              <svg class="ic18"><use href="#fun"/></svg><svg class="ic18"><use href="#fun"/></svg><svg class="ic18"><use href="#fun"/></svg><svg class="ic18"><use href="#fun"/></svg><svg class="ic18"><use href="#fun"/></svg><svg class="ic18"><use href="#fun"/></svg><svg class="ic18"><use href="#fun"/></svg>
              <i class="vsep"></i>
              <svg class="ic18"><use href="#fun"/></svg><svg class="ic18"><use href="#fun"/></svg>
              <span class="vb-blue"><svg class="ic18" viewBox="0 0 20 20"><path d="M5 10h11l-4 4v4l-3 1v-5z" fill="#d4e4f8" stroke="#234" stroke-width=".8"/><path d="M3 3l5 5M14 3l-5 5" stroke="#456"/></svg><i class="arr"></i></span>
              <svg class="ic18" viewBox="0 0 20 20"><path d="M3 18L15 4" stroke="#c0c4c8" stroke-width="1.4"/><circle cx="16" cy="4" r="2" fill="none" stroke="#c0c4c8"/></svg>
              <svg class="ic18" viewBox="0 0 20 20"><path d="M2 18L18 2" stroke="#c0c4c8" stroke-width="1.4"/><circle cx="10" cy="10" r="2.500" fill="#e8e8e8" stroke="#c0c4c8"/></svg>
              <svg class="ic18" viewBox="0 0 20 20"><circle cx="10" cy="10" r="8" fill="none" stroke="#c0c4c8"/><circle cx="10" cy="10" r="3" fill="none" stroke="#c0c4c8"/></svg>
              <svg class="ic18" viewBox="0 0 20 20"><path d="M2 13c2-9 7-9 8-5s-4 5-5 3 6-4 12-1" fill="none" stroke="#c0c4c8" stroke-width="1.2"/></svg>
              <svg class="ic18" viewBox="0 0 20 20"><path d="M2 16l5-10h11l-5 10z" fill="none" stroke="#c0c4c8"/></svg>
            </div>
          </div>
          <svg class="model" viewBox="450 107 1024 888">
            <path d="M988 352L1045 372L1102 394Q1160 402 1245 422Q1318 445 1385 486L1448 522L1474 531V757L1387 877Q1378 881 1368 879L1223 815L1215 773L1205 762L988 678Z" fill="#009500" stroke="#062" stroke-width=".8"/>
            <path d="M1340 762L1438 804L1387 877Q1378 881 1368 879L1225 815L1255 777Q1300 787 1340 762Z" fill="#00a300"/>
            <path d="M1428 606L1437 628L1425 646L1340 760L1438 804L1474 757V580L1458 598Z" fill="#009d00"/>
            <path d="M988 678L1205 762L1215 773L1223 815L1368 879V919L988 779Z" fill="#b97c55" stroke="#222" stroke-width=".8"/>
            <path d="M1387 877L1474 757V797L1387 913Z" fill="#754c34" stroke="#222" stroke-width=".8"/>
            <path d="M1368 879Q1378 881 1387 877V913Q1378 923 1368 919Z" fill="url(#gBrown)" stroke="#222" stroke-width=".8"/>
            <path d="M988 435Q1000 424 1010 423Q1030 421 1052 422L1378 542Q1395 548 1405 560Q1413 570 1413 582Q1413 595 1408 602L1322 717Q1312 727 1302 728Q1285 728 1268 722L1245 712L1205 762L988 678Z" fill="#000096" stroke="#041" stroke-width=".9"/>
            <path d="M1065 427L1378 540" fill="none" stroke="#004a10" stroke-width="2.500"/>
            <path d="M1408 602L1332 722L1337 759L1425 646L1428 606Z" fill="#007f00" stroke="#032" stroke-width=".7"/>
            <path d="M1405 560Q1413 570 1413 582Q1413 595 1408 602L1428 606L1432 595L1427 580L1414 563Z" fill="url(#gCorner)" stroke="#032" stroke-width=".7"/>
            <path d="M1245 712L1268 722Q1285 728 1302 728Q1312 727 1322 717L1332 722L1337 759Q1320 778 1290 782Q1270 782 1252 773Z" fill="url(#gWall)" stroke="#032" stroke-width=".7"/>
            <path d="M1205 762L1245 712L1252 773L1223 815L1215 773Z" fill="#007500" stroke="#032" stroke-width=".7"/>
            <g fill="none" stroke="#032" stroke-width=".8">
              <path d="M1045 372L1000 424M1102 394L1076 426M1448 522L1414 562M1458 598L1474 580M1435 602L1458 598M1340 762L1438 804"/>
              <path d="M1427 593L1437 628L1425 646L1340 760Q1322 778 1290 785Q1272 786 1255 776"/>
              <path d="M1230 809L1256 778M1226 814L1252 775M1369 880V919M1386 878V915"/>
              <path d="M1268 722L1262 750L1256 776M1248 722L1254 774M1322 717L1332 722L1337 759"/>
              <path d="M1262 745Q1290 752 1318 742L1330 727"/>
            </g>
            <ellipse cx="1180" cy="534" rx="60" ry="40" fill="#000096" stroke="#111"/>
            <ellipse cx="1180" cy="532" rx="54" ry="35" fill="url(#gHole)" stroke="#111" stroke-width=".7"/>
            <ellipse cx="1180" cy="543" rx="51" ry="28" fill="#000096" stroke="#111"/>
            <ellipse cx="1272" cy="619" rx="48" ry="34.500" fill="#000096" stroke="#111"/>
            <ellipse cx="1272" cy="617" rx="43" ry="29" fill="url(#gHole)" stroke="#111" stroke-width=".7"/>
            <ellipse cx="1272" cy="626" rx="41" ry="23" fill="#000096" stroke="#111"/>
            <ellipse cx="1000" cy="541" rx="40" ry="24.500" fill="#000096" stroke="#111"/>
            <ellipse cx="1000" cy="539" rx="35" ry="20" fill="url(#gHole)" stroke="#111" stroke-width=".7"/>
            <ellipse cx="1000" cy="547" rx="33" ry="14" fill="#000096" stroke="#111"/>
            <path d="M1071 600Q1078 592 1092 595L1158 621Q1168 630 1156 641Q1148 644 1138 640L1078 617Q1066 611 1071 600Z" fill="#000096" stroke="#111"/>
            <path d="M1076 601Q1082 596 1090 598L1154 623L1150 637L1080 612Q1072 608 1076 601Z" fill="#1818d8" stroke="#111" stroke-width=".6"/>
            <path d="M1092 600L1152 624" stroke="#8c8cf4" stroke-width="1.200"/>
            <g fill="none" stroke="#1a30d0" stroke-width=".8">
              <path d="M1153 612v-14M1150 603l3-7 3 7zM1156 612l9-8M1160 603l6-4-2 6zM1153 612l-4 3M1153 612l16 7"/>
            </g>
            <text class="triad" x="1152" y="623">MODEL</text>
            <text class="triad blue" x="1152" y="584">Z</text>
            <text class="triad blue" x="1168" y="590">Y</text>
            <text class="triad blue" x="1184" y="624">X</text>
          </svg>
        </section>
      </div>
      <div class="bottom">
        <div class="btabs"><span class="btab">NC Execution Monitor</span><span class="btab">Output</span></div>
        <div class="watermark">三维网www.3dportal.cn</div>
      </div>
    </div>
  </div>
</div>

<section class="dlg">
  <div class="dlg-title">
    <svg class="ic16" viewBox="0 0 16 16"><rect x="1" y="1" width="14" height="14" fill="#f4f4f4" stroke="#667"/><rect x="3" y="4" width="7" height="9" fill="#2a7a90"/><rect x="12" y="4" width="1" height="4" fill="#333"/></svg>
    <span>Job Manager</span>
    <b class="close"><svg class="ic12" viewBox="0 0 12 12"><path d="M2 2l8 8M10 2l-8 8" stroke="#fff" stroke-width="2.600"/></svg></b>
  </div>
  <div class="dlg-body">
    <div class="jobs">
      <table class="gt job-t">
        <colgroup><col class="j1"><col class="j2"><col class="j3"><col class="j4"><col></colgroup>
        <tr class="hd"><th>Jo... <i class="sort"></i></th><th>Job Name</th><th>PP Succeded</th><th>Report</th><th class="rest"></th></tr>
        <tr class="blue"><td><span class="focus3">3</span></td><td></td><td class="ctr"><svg class="ic12" viewBox="0 0 12 12"><path d="M1 6l4 4 6-8" fill="none" stroke="#14c414" stroke-width="2.200"/></svg></td><td></td><td class="rest"></td></tr>
        <tr class="plain"><td class="ctr"><svg class="ic14" viewBox="0 0 14 14"><rect x=".5" y=".5" width="13" height="13" fill="#eef2f6" stroke="#99a"/><path d="M5 2h4v3h3v4H9v3H5V9H2V5h3z" fill="#6ee61e" stroke="#111" stroke-width=".8"/></svg></td><td></td><td></td><td></td><td class="rest"></td></tr>
      </table>
    </div>
    <div class="actions">
      <span class="act ag9"><svg class="ic16" viewBox="0 0 18 18"><path d="M1 2h5v8H1z" fill="#ffec90" stroke="#111"/><path d="M8 1c3 0 4 1 4 3M12 4l-2-1M12 4l1-2" fill="none" stroke="#111"/><path d="M8 17V8h9v9M7 17h11M11 10v7M14 10v7" fill="none" stroke="#111" stroke-width="1.200"/></svg><span>Post Process</span></span>
      <span class="act ag16"><svg class="ic14" viewBox="0 0 14 18"><path d="M1 1h9l3 3v13H1z" fill="#fff9dc" stroke="#111"/><path d="M3 3h5v1H6v5H5V4H3z" fill="#d03a10"/><path d="M3 11h8M3 13h8M3 15h8" stroke="#887"/></svg><span>NC Report</span></span>
      <span class="act ag4"><svg class="ic16" viewBox="0 0 18 18"><path d="M1 1h9l3 3v13H1z" fill="#fff" stroke="#111"/><text class="glyph-i" x="3" y="14">i</text><circle cx="13" cy="11" r="3.500" fill="#ffc800" stroke="#a60"/><path d="M13 15v3" stroke="#555" stroke-width="2"/></svg><span>Show Post Log</span></span>
      <span class="act dis"><svg class="ic16" viewBox="0 0 18 18"><path d="M1 1h9l3 3v13H1z" fill="#d0d0d0" stroke="#888"/><path d="M3 4h6M3 7h6M6 4v8" stroke="#777"/><circle cx="13" cy="11" r="3.500" fill="#aaa" stroke="#777"/><path d="M13 15v3" stroke="#888" stroke-width="2"/></svg><span>Show NC Report</span></span>
    </div>
    <fieldset class="fs fs-job">
      <legend>Job Parameters</legend>
      <div class="params">
        <div class="ptable lp">
          <div class="ptable-main">
            <table class="gt param-t">
              <colgroup><col class="p1"><col class="p2"></colgroup>
              <tr class="hd"><th>Parameter</th><th>Value</th></tr>
              <tr><td>REFERENCE UCS</td><td>MODEL</td></tr>
              <tr><td>Machine Name</td><td>None</td></tr>
              <tr><td>G-Code File</td><td>Z:\123.nc</td></tr>
              <tr><td>Post Date and Time</td><td>15-09-2016&nbsp; 17:05:56</td></tr>
              <tr><td>Post Processor Name</td><td>CNC</td></tr>
              <tr><td>Setup Zero</td><td>X:0.000 Y:0.000 Z:0.000</td></tr>
              <tr><td>Machining Time</td><td>03:46:59</td></tr>
              <tr><td>Report Comment</td><td></td></tr>
              <tr><td>Report Name</td><td></td></tr>
            </table>
            <div class="hs param-hs"><i class="arl"></i><div class="thumb"><em>III</em></div><i class="arr"></i></div>
          </div>
          <div class="vs"><i class="aru"></i><div class="vthumb vt-l"><em>≡</em></div><i class="ard"></i></div>
        </div>
        <div class="ptable rp">
          <div class="ptable-main">
            <table class="gt param-t white">
              <colgroup><col class="p3"><col class="p4"></colgroup>
              <tr class="hd"><th>Post parameter</th><th>Value</th></tr>
              <tr><td>机床系统配置</td><td>法那克</td></tr>
              <tr><td>机械坐标系 Machine system</td><td>54</td></tr>
              <tr><td>输出圆弧代码</td><td>I J</td></tr>
              <tr><td>使用G01代码钻孔(佳铁)</td><td>No</td></tr>
              <tr><td>是否使用行号</td><td>Yes</td></tr>
              <tr><td>程序单是否输出刀号</td><td>No</td></tr>
              <tr><td>程序后缀名</td><td>.NC</td></tr>
              <tr><td>后处理分割方式</td><td>按TP分割</td></tr>
              <tr><td>同一TP内刀具输出方式(仅TP分割有效)</td><td>相同刀具(如...</td></tr>
              <tr><td>程序名编号前缀(仅刀具分割有效，如...</td><td></td></tr>
            </table>
          </div>
          <div class="vs"><i class="aru"></i><div class="vthumb vt-r"><em>≡</em></div><i class="ard"></i></div>
        </div>
      </div>
    </fieldset>
    <div class="lowgrid">
      <fieldset class="fs fs-g">
        <legend>G-Code Files</legend>
        <div class="gfile-head"></div>
        <div class="gfile-row"><span>Z:\123.nc</span></div>
        <div class="gfile-white"></div>
        <div class="gbtns">
          <span class="act"><svg class="ic16" viewBox="0 0 16 16"><rect x="0" y="1" width="12" height="7" fill="#8a18c8"/><path d="M2 3h2M5 3h2M8 3h2M2 5h2M5 5h2M8 5h2" stroke="#fff"/><circle cx="11" cy="11" r="3" fill="#ffd040" stroke="#a60" stroke-width=".6"/></svg><span class="sg">Show G-Code</span></span>
          <span class="act"><svg class="ic16" viewBox="0 0 16 18"><rect x="5" y="1" width="6" height="4" rx="1" fill="#d06020" stroke="#111" stroke-width=".5"/><path d="M7 5h2v7H7z" fill="#ffe000" stroke="#111" stroke-width=".5"/><path d="M1 15l4-4h9v3l-4 3H1z" fill="#888" stroke="#111" stroke-width=".7"/></svg><span class="sm">Simulation</span></span>
          <span class="act"><svg class="ic16" viewBox="0 0 16 18"><rect x="1" y="1" width="14" height="16" rx="2" fill="#2d8cf0" stroke="#1060c0"/><path d="M3.500 4h9L9 14H7z" fill="#fff"/><path d="M5.500 5.500h5L8 11z" fill="#2d8cf0"/></svg><span class="sv">Vericut</span></span>
          <span class="act"><svg class="ic16" viewBox="0 0 18 18"><path d="M7 1C3 2 1 5 1 9s2 7 6 8" fill="none" stroke="#555" stroke-width="1.600"/><circle cx="4" cy="3" r="1.400" fill="#d22"/><circle cx="6" cy="16" r="1.400" fill="#d22"/><rect x="5" y="3" width="10" height="12" rx="2" fill="#444"/><text class="glyph-e" x="7" y="13">E</text></svg><span class="se">Eureka</span></span>
        </div>
      </fieldset>
      <fieldset class="fs fs-p">
        <legend>Procedures</legend>
        <div class="ptable-wrap">
          <table class="gt proc-t">
            <colgroup><col class="r1"><col class="r2"><col class="r3"></colgroup>
            <tr class="hd"><th>Procedure Name</th><th>TP Name</th><th>Cutter</th></tr>
            <tr><td>R-Spiral_5</td><td>123</td><td>D50R6</td></tr>
          </table>
        </div>
        <div class="p-foot"></div>
      </fieldset>
    </div>
    <div class="exit"><svg class="ic22" viewBox="0 0 22 24"><path d="M9 4l8-3v20l-8-3z" fill="#6a9cf0" stroke="#1a3fa0"/><path d="M2 9h6V6l5 5-5 5v-3H2z" fill="#222"/></svg></div>
  </div>
  <svg class="grip-rs" viewBox="0 0 10 10"><path d="M1 10L10 1M4 10l6-6M7 10l3-3" stroke="#9aa" stroke-width="1.100"/></svg>
</section>

<svg class="annot" viewBox="0 0 1474 1036" aria-hidden="false">
  <g class="shadowed">
    <path d="M88 938L303 320L298 317L320 295L321 325L315 322L91 938Z" fill="#f00"/>
    <path d="M483 296L486 296L530 793L536 793L527 820L513 795L519 793Z" fill="#f00"/>
    <rect x="3" y="919" width="79" height="53" rx="5" fill="none" stroke="#e8141c" stroke-width="2"/>
    <rect x="495" y="830" width="72" height="45" rx="5" fill="none" stroke="#e8141c" stroke-width="2"/>
    <path d="M573 930L590 930L600 937L585 936Z" fill="#e81414"/>
  </g>
  <text class="xmark" x="606" y="946">X</text>
</svg>
</body>
</html>
```

FILE: styles.css
```css
* { box-sizing: border-box; }
html, body { margin: 0; padding: 0; }
body {
  width: 1474px; height: 1036px; overflow: hidden; position: relative;
  background: #f0f0f0; color: #222;
  font: 11px/13px "Open Sans", "Noto Sans CJK SC", sans-serif;
}
i, em { font-style: normal; }
svg { display: block; flex: none; }
.defs { position: absolute; width: 0; height: 0; }

.ic12 { width: 12px; height: 14px; }
.ic14 { width: 14px; height: 14px; }
.ic16 { width: 16px; height: 16px; }
.ic18 { width: 18px; height: 18px; }
.ic20 { width: 20px; height: 24px; }
.ic22 { width: 22px; height: 22px; }
.ic26 { width: 28px; height: 28px; }
.ic30 { width: 30px; height: 30px; }
.ic32 { width: 32px; height: 32px; }

.app { width: 1474px; height: 1036px; display: flex; flex-direction: column; }

/* Title bar */
.titlebar {
  height: 28px; flex: none; display: flex; align-items: center;
  background: #84a1b8; border-top: 1px solid #8a8f94; padding: 0 59px 0 6px; color: #fff;
}
.logo { width: 16px; height: 16px; background: linear-gradient(#f69a30, #d75a10); border-radius: 2px; margin-top: 2px; flex: none; }
.logo-c { font: bold 10px/10px "Liberation Sans", sans-serif; color: #fff; padding-left: 1px; display: block; }
.logo-n { font: bold 7px/7px "Liberation Sans", sans-serif; color: #111; display: block; text-align: right; margin-top: -2px; padding-right: 1px; }
.qat {
  margin-left: 12px; width: 289px; height: 21px; flex: none; display: flex; align-items: center; gap: 3px;
  padding-left: 1px; background: #aabccb; border: 1px solid #3f5263; border-radius: 3px;
}
.q { width: 18px; height: 18px; }
.q-gap { margin-left: 8px; }
.q-hl { margin-left: 2px; }
.dd { display: inline-block; width: 0; height: 0; border: 3px solid transparent; border-top: 4px solid #333; border-bottom: 0; flex: none; }
.qat .dd { margin: 0 -1px 0 0; }
.menu { display: flex; gap: 15.2px; margin-left: 16px; flex: 1; font-size: 11px; white-space: nowrap; }
.app-title { font-weight: 700; font-size: 11.5px; }

/* Ribbon */
.ribbon { height: 79px; flex: none; display: flex; padding: 1px 0 0 8px; background: #f0f0f0; border-bottom: 1px solid #888; }
.group {
  position: relative; height: 73px; margin-right: 3px; padding-top: 3px; display: flex;
  background: #dfe8f0; border: 1px solid #cdd6de; border-radius: 2px; color: #333; flex: none;
}
.grip {
  position: absolute; left: 5px; top: 4px; width: 7px; height: 13px;
  background-image: radial-gradient(circle, #8aa4bc 1.2px, transparent 1.300px);
  background-size: 4px 4px;
}
.grip-h { position: static; width: 18px; height: 6px; margin: 4px 0 3px 55px; flex: none; align-self: flex-start; }
.g1 { width: 79px; margin-right: 4px; }
.g2 { width: 147px; padding-left: 15px; margin-right: 2px; }
.g3 { width: 144px; padding-left: 16px; }
.g4 { width: 227px; padding-left: 12px; margin-right: 4px; }
.g5 { width: 94px; padding-left: 9px; }
.g6 { width: 128px; padding-left: 13px; }
.g7 { width: 73px; padding-left: 4px; }
.g8 { width: 132px; padding-left: 10px; margin-right: 2px; }
.g9 { width: 79px; padding-left: 11px; margin-right: 1px; }
.g10 { width: 170px; padding-left: 11px; margin-right: 3px; }
.g11 { width: 93px; padding-left: 10px; }
.g12 { flex: 1; padding-left: 10px; margin-right: 0; border-right: 0; }

.w21 { width: 21px; } .w24 { width: 24px; } .w34 { width: 34px; } .w36 { width: 36px; } .w38 { width: 38px; } .w40 { width: 40px; }
.w46 { width: 46px; } .w56 { width: 56px; } .w72 { width: 72px; } .w73 { width: 71px; }
.w74 { width: 74px; } .w79 { width: 77px; }
.ml1 { margin-left: 1px; } .ml2 { margin-left: 2px; } .ml3 { margin-left: 3px; } .ml-3 { margin-left: -3px; }
.h47 { height: 47px; }

.tool { display: flex; flex-direction: column; align-items: center; text-align: center; white-space: nowrap; }
.tool.off { color: #999; }
.ti32 { height: 32px; width: 100%; display: flex; align-items: center; justify-content: center; }
.lab1 { line-height: 13px; }
.col { display: flex; flex-direction: column; gap: 2px; align-items: center; }
.slot { width: 36px; height: 33px; flex: none; display: flex; align-items: center; justify-content: center; }
.col.w34 .slot { width: 34px; }
.hl { background: #c2e2f8; border: 1px solid #7fb2d8; }
.ddcol { width: 10px; height: 70px; display: flex; align-items: flex-end; padding-bottom: 15px; justify-content: center; }
.sepl { border-left: 1px solid #c8d2dc; height: 70px; }
.mini3 { gap: 4px; justify-content: center; height: 66px; }
.big-a { font: italic bold 23px/26px "Liberation Serif", serif; color: #111; }
.boxes { gap: 4px; }
.boxes svg:nth-child(3) { margin-top: 4px; }
.dd-ucs { margin-top: 15px; }
.stack { display: flex; flex-direction: column; margin-top: 4px; }
.combo { width: 116px; height: 20px; display: flex; background: #fff; border: 1px solid #c4ccd2; font: 11px/18px "Liberation Sans", sans-serif; padding-left: 2px; color: #222; }
.combo span { flex: 1; }
.combo b { width: 14px; border-left: 1px solid #ccc; background: #f0f0f0; display: flex; align-items: center; justify-content: center; }
.bynctool { display: flex; align-items: center; gap: 5px; margin: 10px 0 0 -3px; color: #333; }
.glyph { font: bold 20px "Liberation Sans", sans-serif; fill: #d4d4d4; }

/* Workspace */
.workspace { flex: 1; display: flex; min-height: 0; }
.sidebar { width: 80px; height: 876px; flex: none; display: flex; flex-direction: column; align-items: center; background: linear-gradient(90deg, #dfe9f2 73px, #f2f4f6 73px); border-left: 2px solid #aeb4ba; border-bottom: 1px solid #ccd4da; padding-right: 2px; }
.side-tabs { display: flex; gap: 1px; align-self: flex-start; margin-left: 3px; height: 6px; flex: none; }
.side-tabs i { width: 6px; height: 5px; background: #b8d0e8; border: 1px solid #90aac8; }
.side-tabs i:first-child { background: #fff; }
.sitem { width: 73px; height: 48px; flex: none; padding-bottom: 3px; display: flex; flex-direction: column; align-items: center; text-align: center; white-space: nowrap; color: #333; letter-spacing: .1px; }
.sitem svg { height: 32px; flex: none; }
.sitem.tall { height: 60px; }
.sitem.tall2 { height: 62px; }
.sitem.bare { height: 36px; }
.sitem.off { color: #999; height: 59px; }
.side-div { width: 70px; height: 3px; border-top: 1px solid #c4ccd2; flex: none; }
.sitem.active { background: linear-gradient(#c4e3fa, #c8e6fc); border: 1px solid #a8cbe6; height: 50px; margin-top: -2px; width: 71px; padding: 2px 0 0; }

.work-main { flex: 1; display: flex; flex-direction: column; min-width: 0; }
.work-top { height: 888px; flex: none; display: flex; }
.nc-panel { width: 370px; flex: none; display: flex; flex-direction: column; border-right: 2px solid #6e6e6e; background: #f0f0f0; }
.panel-head { height: 19px; margin: 1px 3px 0 0; flex: none; display: flex; align-items: center; justify-content: space-between; padding: 0 5px 0 4px; background: #b8c7d5; color: #444; font-size: 12px; }
.pin { width: 9px; height: 13px; }
.proc-frame { margin: 3px 5px 0 3px; height: 223px; flex: none; display: flex; flex-direction: column; background: #fff; border: 2px solid #6a6a6a; border-bottom-width: 3px; }
.orange {
  height: 15px; flex: none; display: flex; background: #ff8427; color: #fff;
  font-size: 12px; line-height: 15px; white-space: nowrap; overflow: hidden;
}
.orange span { border-right: 1px solid #fff; text-align: center; flex: none; overflow: hidden; }
.c-status { width: 59px; } .c-name { width: 142px; } .c-a { width: 12px; } .c-b { width: 11px; }
.c-nu { width: 14px; letter-spacing: -1.2px; } .c-u { width: 15px; } .c-s { width: 16px; } .c-com { width: 61px; } .c-c { width: 16px; } .orange .c-p { width: 12px; border: 0; }
.prow { height: 18px; flex: none; display: flex; font-size: 12px; line-height: 16px; color: #111; }
.pstat { width: 43px; flex: none; display: flex; justify-content: flex-end; padding-right: 10px; align-items: center; }
.st { width: 15px; height: 15px; }
.st-top { width: 16px; height: 16px; }
.pbody { flex: 1; display: grid; grid-template-columns: 19px 138px 24px 47px 60px 24px; align-items: start; }
.pbody.setup { border-bottom: 2px solid #111; height: 18px; }
.pbody.sel { background: #a6caf0; border-bottom: 1px solid #123a80; height: 17px; padding-top: 0; align-items: center; }
.pexp { display: flex; justify-content: center; align-self: center; }
.pend { display: flex; justify-content: flex-end; align-self: center; }
.pbulb { display: flex; justify-content: center; padding-left: 6px; }
.pnum { padding-left: 3px; }
.nowrap { white-space: nowrap; }
.swatch-cell { display: flex; align-self: center; }
.swatch { width: 13px; height: 14px; background: #0000ff; border: 1px solid #b8c0c8; border-radius: 1px; }
.ex { position: relative; display: block; width: 12px; height: 12px; border: 1px solid #9a9a9a; background: #fff; flex: none; }
.ex::before { content: ""; position: absolute; left: 2px; right: 2px; top: 4px; height: 1px; background: #8a8a8a; }
.ex::after { content: ""; position: absolute; top: 2px; bottom: 2px; left: 4px; width: 1px; background: #8a8a8a; }
.ex.minus::after { display: none; }
.ex.dark { border-color: #111; background: transparent; }
.ex.dark::before, .ex.dark::after { background: #111; }

.hs { height: 16px; display: flex; align-items: center; background: #f0f0f0; }
.proc-hs { margin-top: auto; margin-bottom: 2px; padding-left: 3px; }
.thumb { height: 15px; background: linear-gradient(#f8f8f8, #cfcfcf); border: 1px solid #a0a0a0; border-radius: 2px; display: flex; align-items: center; justify-content: center; color: #666; font: 8px/10px "Liberation Sans", sans-serif; }
.proc-hs .thumb { width: 290px; margin-left: 8px; }
.arl { width: 0; height: 0; border: 4px solid transparent; border-right: 4px solid #333; border-left: 0; flex: none; }
.arr { width: 0; height: 0; border: 4px solid transparent; border-left: 4px solid #333; border-right: 0; flex: none; display: block; }
.aru { width: 0; height: 0; border: 4px solid transparent; border-bottom: 4px solid #333; border-top: 0; display: block; flex: none; }
.ard { width: 0; height: 0; border: 4px solid transparent; border-top: 4px solid #333; border-bottom: 0; display: block; flex: none; }

.lower { height: 615px; flex: none; display: flex; margin-right: 3px; }
.lower-main { flex: 1; min-width: 0; overflow: hidden; }
.sel-section { height: 98px; margin-top: 8px; border-top: 2px solid #333; padding: 8px 0 0 9px; color: #a8a8a8; }
.sel-labels { display: flex; line-height: 14px; }
.sel-labels span:first-child { width: 122px; }
.sel-values { display: flex; align-items: center; margin-top: 4px; padding-bottom: 4px; border-bottom: 1px solid #c8c8c8; margin-left: -6px; padding-left: 6px; color: #888; letter-spacing: -.3px; }
.sel-a { display: flex; align-items: center; width: 123px; white-space: nowrap; }
.sel-a .dd { margin-left: 20px; border-top-color: #777; }
.sel-b { display: flex; align-items: center; gap: 3px; white-space: nowrap; }
.tree { width: 262px; margin-left: 3px; border-left: 2px solid #6e6e6e; border-top: 2px solid #6e6e6e; font: 500 13px/19px Roboto, sans-serif; color: #9a9a9a; background: #fff; letter-spacing: .45px; white-space: nowrap; }
.tree-head { height: 17px; background: #b4c4d4; text-align: center; padding-right: 36px; font: 12px/17px "Open Sans", sans-serif; color: #666; letter-spacing: 0; }
.tr { height: 19px; display: flex; align-items: center; border-bottom: 1px solid #c8c8c8; }
.tr .ex { margin-right: 4px; }
.tr.l0 { padding-left: 3px; }
.tr.l0 .tpi { margin-right: 3px; }
.tr.l1 { padding-left: 18px; }
.tr.l2 { padding-left: 27px; }
.tr.l2 .tpi { margin-right: 3px; }
.tpi { width: 13px; height: 14px; }
.focusbox { display: flex; align-items: center; flex: 1; height: 19px; border: 1px solid #777; border-right: 0; margin-left: -1px; padding-left: 2px; }
.lower-scroll { width: 17px; margin-right: 5px; display: flex; flex-direction: column; align-items: center; justify-content: flex-end; padding-bottom: 6px; background: #f0f0f0; border-left: 1px solid #ddd; }
.vthumb { width: 15px; height: 14px; background: linear-gradient(90deg, #fafafa, #cfcfcf); border: 1px solid #a0a0a0; border-radius: 2px; color: #666; text-align: center; font: 11px/14px "Liberation Sans", sans-serif; }
.lower-scroll .vthumb { height: 18px; margin-bottom: 8px; }
.panel-tabs { display: flex; align-items: flex-end; margin: 3px 0 0 3px; height: 24px; border-top: 1px solid #b8b8b8; padding-bottom: 1px; }
.ptab { height: 18px; padding: 0 4px; white-space: nowrap; background: linear-gradient(#e8e8e8,#f4f4f4); border: 1px solid #a8a8a8; line-height: 16px; font-size: 11.500px; color: #222; margin-bottom: 1px; }
.ptab.on { height: 21px; padding: 2px 5px; background: #fff; margin-bottom: 0; width: 125px; font-size: 12px; }

.viewport { flex: 1; position: relative; background: #e4e4e4; overflow: hidden; }
.vbars { position: relative; z-index: 1; display: flex; padding: 12px 0 0 219px; height: 37px; }
.vbar { height: 25px; display: flex; align-items: center; gap: 3px; background: #ececec; border: 1px solid #dcdcdc; border-radius: 2px; }
.vbar .dd { margin-left: 1px; }
.vb1 { width: 138px; padding-left: 3px; margin-right: 42px; }
.vb2 { width: 192px; padding-left: 3px; margin-right: 43px; }
.vb3 { flex: 1; padding-left: 4px; }
.sp7 { margin-left: 5px; }
.vsep { width: 1px; height: 20px; background: #bbb; flex: none; }
.vb-hl { width: 21px; height: 20px; display: flex; align-items: center; justify-content: center; border: 1px solid #7fb2d8; background: #f4f8fb; }
.vb-blue { width: 25px; height: 25px; display: flex; align-items: center; background: #a8c8f0; gap: 1px; }
.model { position: absolute; left: 0; top: 0; width: 1024px; height: 888px; }
.triad { font: 8px "Liberation Sans", sans-serif; fill: #e01010; }
.triad.blue { fill: #1a30d0; }

.bottom { flex: 1; display: flex; justify-content: space-between; padding: 3px 19px 0 0; }
.btabs { display: flex; gap: 13px; height: 21px; }
.btab { background: #fff; border: 1px solid #a8a8a8; border-bottom: 0; padding: 2px 8px 2px 5px; font: 700 12px/16px "Liberation Sans", sans-serif; color: #111; letter-spacing: -.1px; white-space: nowrap; }
.watermark { margin-top: 14px; font: 700 16px/18px "DejaVu Sans", "Noto Sans CJK SC", sans-serif; color: #fff; -webkit-text-stroke: .8px #e0242c; white-space: nowrap; transform: scaleY(.8); }

/* Dialog */
.dlg {
  position: absolute; left: 305px; top: 222px; width: 683px; height: 708px; display: flex; flex-direction: column;
  background: linear-gradient(#a3c1da, #b9d3e9 60px); border: 1px solid #1a1a1a; border-radius: 5px 5px 0 0;
  box-shadow: inset 0 0 0 1px #cfe2f0, inset 0 -1px 0 1px #22c4ee; padding: 0 9px 7px 12px; font-family: Roboto, "Noto Sans CJK SC", sans-serif; color: #222;
}
.dlg-title { height: 30px; flex: none; display: flex; align-items: center; margin-left: -4px; padding-top: 6px; font-size: 12px; gap: 4px; }
.dlg-title .ic16 { width: 15px; height: 15px; }
.dlg-title span { flex: 1; }
.close { width: 30px; height: 16px; align-self: flex-start; margin-top: 3px; margin-right: 1px; background: linear-gradient(#d97878, #b93030); border: 1px solid #6e3030; border-radius: 2px; display: flex; align-items: center; justify-content: center; }
.dlg-body { flex: 1; background: #f0f0f0; padding: 1px 9px 0 0; display: flex; flex-direction: column; min-height: 0; }

.gt { border-collapse: collapse; table-layout: fixed; font-size: 11px; }
.gt th { font-weight: 400; text-align: left; background: #f0f0f0; border-right: 1px solid #a8a8a8; border-bottom: 1px solid #a8a8a8; padding: 1px 0 0 5px; height: 18px; white-space: nowrap; overflow: hidden; }
.gt td { height: 19px; border-right: 1px solid #c4c4c4; border-bottom: 1px solid #c4c4c4; padding: 0 0 0 2px; white-space: nowrap; overflow: hidden; }
.ctr svg { margin: 0 auto; }

.jobs { height: 140px; flex: none; background: #fff; border-left: 2px solid #9a9a9a; border-top: 3px solid #b0b0b0; }
.job-t { width: 100%; }
.j1 { width: 45px; } .j2 { width: 70px; } .j3 { width: 90px; } .j4 { width: 48px; }
.job-t .hd th { height: 17px; padding-left: 6px; border-bottom: 0; }
.job-t .rest { border-right: 0; background: none; }
.job-t .hd .rest { background: #f0f0f0; }
.sort { display: inline-block; width: 0; height: 0; border: 3px solid transparent; border-bottom: 6px solid #ccc; border-top: 0; margin-left: 4px; vertical-align: 2px; }
.blue td { background: #9595d6; height: 20px; border: 0; outline: 1px dotted #444; outline-offset: -1px; padding: 0; }
.blue td.rest { background: #fff; outline: 0; border-bottom: 1px solid #c4c4c4; }
.focus3 { display: block; margin: 2px; height: 15px; line-height: 15px; padding-left: 1px; outline: 1px dotted #333; }
.plain td { height: 19px; }

.actions { margin-top: 7px; height: 29px; flex: none; display: grid; grid-template-columns: 145px 134px 139px auto; align-items: center; padding-left: 13px; border: 1px solid #dfe3e6; border-radius: 3px; margin-left: 1px; background: #f0f0f0; }
.act { display: flex; align-items: center; white-space: nowrap; }
.ag9 { gap: 9px; } .ag16 { gap: 16px; } .ag4 { gap: 4px; }
.dis { color: #a8a8a8; }
.glyph-i { font: bold 12px "Liberation Serif", serif; fill: #1a3fd8; }
.glyph-e { font: bold 10px "Liberation Sans", sans-serif; fill: #fff; }

.fs { margin: 0; padding: 0; border: 1px solid #dfe3e6; border-radius: 3px; min-width: 0; background: #f0f0f0; }
.fs legend { padding: 0 2px; margin-left: 3px; font-size: 11px; line-height: 14px; }
.fs-job { margin: 2px 0 0 1px; height: 230px; padding-top: 4px; }
.params { display: flex; gap: 16px; margin-left: -1px; height: 208px; }
.ptable { width: 316px; display: flex; height: 208px; overflow: hidden; }
.ptable-main { width: 300px; overflow: hidden; }
.p1 { width: 149px; } .p2 { width: 151px; } .p3 { width: 215px; } .p4 { width: 85px; }
.param-t { width: 300px; }
.param-t td { padding-left: 5px; }
.param-t td + td { padding-left: 2px; }
.param-t .hd th { height: 19px; border-top: 1px solid #ccc; border-bottom: 2px solid #a8a8a8; }
.param-t.white td { background: #fff; }
.rp .ptable-main { background: #fff; }
.param-hs { margin-top: 2px; padding-left: 3px; }
.param-hs .thumb { width: 142px; margin: 0 125px 0 5px; }
.vs { width: 16px; height: 100%; display: flex; flex-direction: column; align-items: center; padding-top: 6px; background: #f0f0f0; }
.vs .ard { margin-top: auto; margin-bottom: 20px; }
.vs .vthumb { margin-top: 5px; }
.vt-l { height: 87px; line-height: 87px; }
.vt-r { height: 66px; line-height: 66px; }
.rp .vs .ard { margin-bottom: 6px; }
.lowgrid { display: flex; gap: 14px; margin: 19px 0 0 1px; height: 192px; flex: none; }
.fs-g { width: 318px; height: 192px; padding: 1px 0 0; }
.fs-p { width: 317px; height: 192px; padding: 2px 0 0; }
.gfile-head { height: 20px; background: #f0f0f0; border-top: 2px solid #aaa; border-bottom: 1px solid #aaa; border-right: 1px solid #aaa; margin-right: 2px; }
.gfile-row { height: 20px; background: #9595d6; outline: 1px dotted #444; outline-offset: -1px; margin-right: 2px; padding-left: 5px; line-height: 20px; border-bottom: 1px solid #c4c4c4; }
.gfile-white { height: 107px; background: #fff; }
.gbtns { display: grid; grid-template-columns: 90px 90px 70px auto; align-items: center; height: 29px; padding-left: 5px; background: #f0f0f0; }
.sm { margin-left: 7px; } .sv { margin-left: 3px; } .se { margin-left: 4px; }
.sg { margin-left: -1px; }
.ptable-wrap { height: 146px; background: #fff; border-left: 2px solid #a8a8a8; }
.proc-t { width: 312px; }
.r1 { width: 99px; } .r2 { width: 106px; } .r3 { width: 107px; }
.proc-t .hd th { height: 18px; padding-left: 3px; border-top: 1px solid #aaa; border-bottom: 2px solid #a8a8a8; }
.proc-t .hd th + th { padding-left: 7px; }
.proc-t td { padding-left: 3px; height: 20px; }
.p-foot { height: 28px; background: #f0f0f0; }
.exit { align-self: flex-end; width: 24px; height: 26px; margin-top: 3px; margin-right: -1px; background: linear-gradient(#fafcfe, #e4e8ec); border: 1px solid #bcc4cc; display: flex; align-items: center; justify-content: center; }
.grip-rs { position: absolute; right: 8px; bottom: 8px; width: 10px; height: 10px; }

/* Annotations */
.annot { position: absolute; left: 0; top: 0; width: 1474px; height: 1036px; pointer-events: none; }
.shadowed { filter: drop-shadow(2px 2px 2px rgba(0,0,0,.35)); }
.xmark { font: 700 14px "Liberation Sans", sans-serif; fill: #e81414; }
```
